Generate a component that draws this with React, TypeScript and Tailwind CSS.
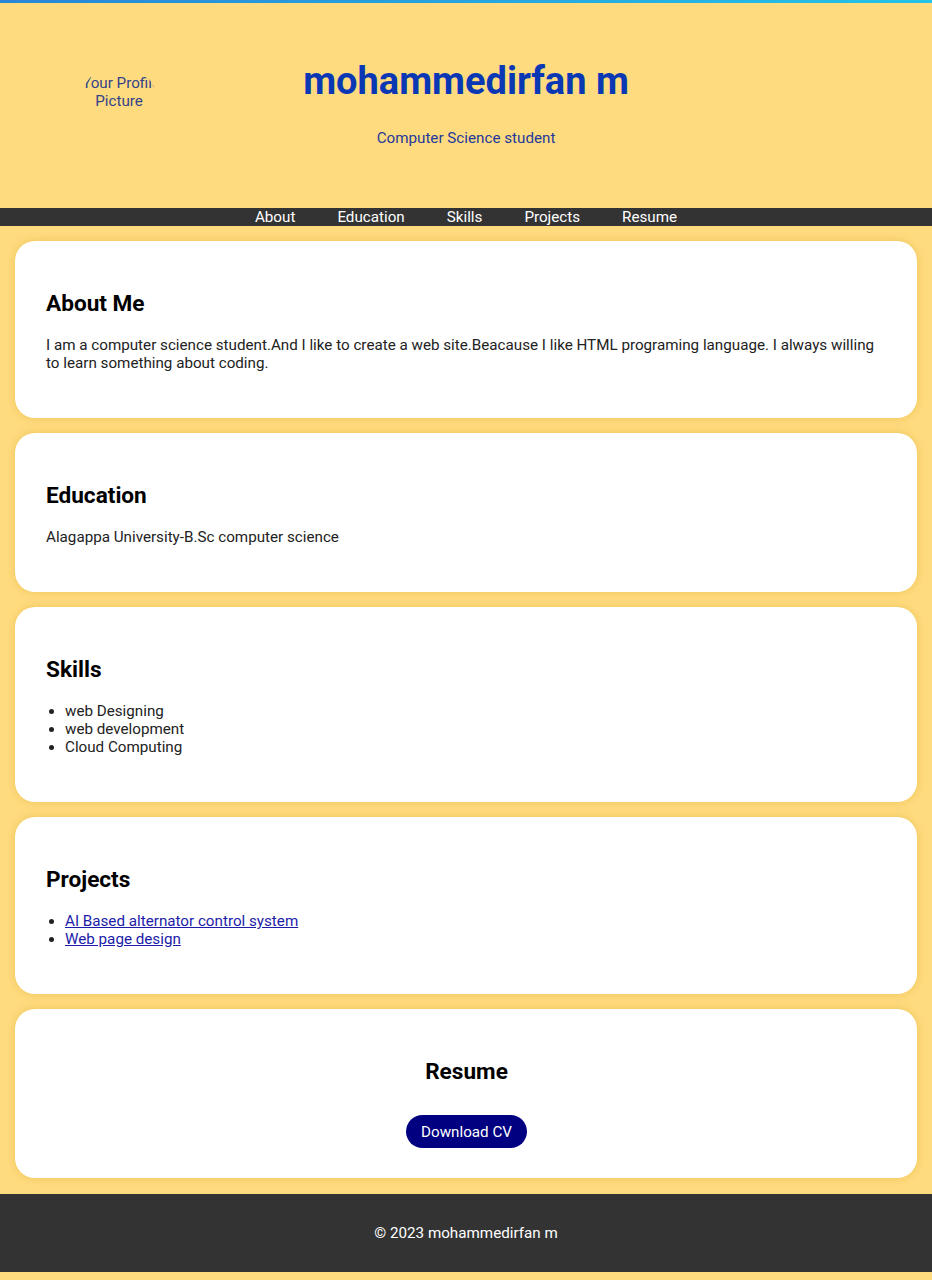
import React from "react";

const font = { fontFamily: "Roboto, 'Liberation Sans', sans-serif" };

function Card({ children, center }: { children: React.ReactNode; center?: boolean }) {
  return (
    <section
      className={`bg-white rounded-[20px] pl-[31px] pr-[30px] py-[30px] shadow-[0_0_10px_rgba(220,170,40,0.45)] ${center ? "text-center" : ""}`}
    >
      {children}
    </section>
  );
}

function H2({ children }: { children: React.ReactNode }) {
  return <h2 className="text-[22.6px] leading-[26px] font-bold text-black mt-[20px] mb-[19px]">{children}</h2>;
}

export default function App() {
  return (
    <div className="min-h-[1280px] bg-[#ffdb80] text-[15.2px] leading-[18px] text-[#222]" style={font}>
      <div className="h-[3px] bg-gradient-to-r from-[#2a86d6] to-[#25c3e6]" />
      <header className="grid grid-cols-[1fr_auto_1fr] pt-[55px] pb-[61px]">
        <div className="pl-[81px] pt-[6px]">
          <div className="w-[76px] h-[76px] rounded-full overflow-hidden flex flex-col pt-[10px] text-[#33428a] text-[15.2px] leading-[18px]">
            <span className="whitespace-nowrap ml-[1px]">Your Profile</span>
            <span className="whitespace-nowrap self-center">Picture</span>
          </div>
        </div>
        <div className="text-center">
          <h1 className="text-[38px] leading-[47px] font-bold text-[#0a37b4]">mohammedirfan m</h1>
          <p className="mt-[24px] text-[#24389a] leading-[18px]">Computer Science student</p>
        </div>
        <div />
      </header>
      <nav className="bg-[#333] h-[18px] flex justify-center items-center text-white text-[15.2px] leading-[18px]">
        <a className="mx-[21px]">About</a>
        <a className="mx-[21px]">Education</a>
        <a className="mx-[21px]">Skills</a>
        <a className="mx-[21px]">Projects</a>
        <a className="mx-[21px]">Resume</a>
      </nav>
      <main className="flex flex-col gap-[15px] px-[15px] pt-[15px] pb-[16px]">
        <Card>
          <H2>About Me</H2>
          <p className="mb-[16px]">
            I am a computer science student.And I like to create a web site.Beacause I like HTML programing language. I always willing to learn something about coding.
          </p>
        </Card>
        <Card>
          <H2>Education</H2>
          <p className="mb-[16px]">Alagappa University-B.Sc computer science</p>
        </Card>
        <Card>
          <H2>Skills</H2>
          <ul className="list-disc pl-[19px] mb-[16px]">
            <li>web Designing</li>
            <li>web development</li>
            <li>Cloud Computing</li>
          </ul>
        </Card>
        <Card>
          <H2>Projects</H2>
          <ul className="list-disc pl-[19px] mb-[16px]">
            <li>
              <a className="text-[#1c1ca8] underline">AI Based alternator control system</a>
            </li>
            <li>
              <a className="text-[#1c1ca8] underline">Web page design</a>
            </li>
          </ul>
        </Card>
        <Card center>
          <H2>Resume</H2>
          <div className="mt-[30px]">
            <a className="inline-block bg-[#000080] text-white rounded-full px-[15px] py-[7.5px] leading-[18px]">Download CV</a>
          </div>
        </Card>
      </main>
      <footer className="bg-[#333] text-white text-center h-[78px] flex items-center justify-center">
        <p>© 2023 mohammedirfan m</p>
      </footer>
    </div>
  );
}
